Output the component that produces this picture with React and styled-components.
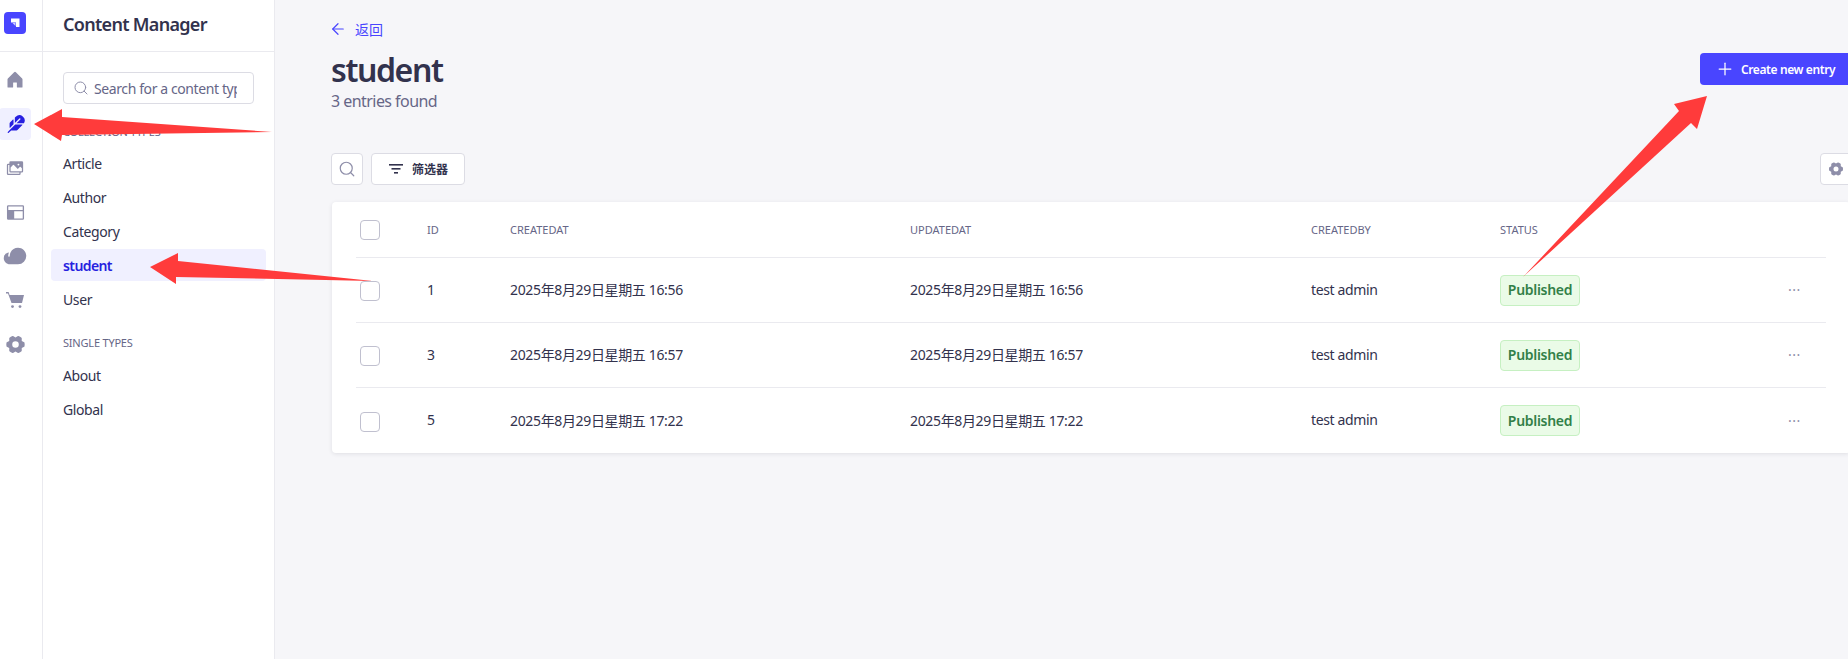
import React from 'react'
import styled, { createGlobalStyle } from 'styled-components'
import {
  PiHouseFill,
  PiFeatherFill,
  PiImagesFill,
  PiLayoutFill,
  PiCloudFill,
  PiGearSixFill,
} from 'react-icons/pi'
import { Search, ArrowLeft, Plus } from 'lucide-react'

const GlobalStyle = createGlobalStyle`
  html, body {
    margin: 0;
    padding: 0;
    background: #f6f6f9;
    font-family: 'Noto Sans', 'Noto Sans CJK SC', sans-serif;
    color: #32324d;
    overflow: hidden;
  }
  * { box-sizing: border-box; }
`

const Page = styled.div`
  position: relative;
  display: flex;
  width: 1848px;
  height: 659px;
  overflow: hidden;
`

const Rail = styled.div`
  width: 43px;
  flex: none;
  background: #fff;
  border-right: 1px solid #eaeaef;
`

const RailTop = styled.div`
  height: 52px;
  padding: 12px 0 0 4px;
  border-bottom: 1px solid #eaeaef;
`

const Logo = styled.div`
  width: 22px;
  height: 22px;
  border-radius: 4px;
  background: #4945ff;
  display: flex;
  align-items: center;
  justify-content: center;
`

const RailList = styled.div`
  display: flex;
  flex-direction: column;
  gap: 12px;
  padding-top: 12px;
  margin-left: -1px;
`

const RailItem = styled.div`
  width: 32px;
  height: 32px;
  border-radius: 4px;
  display: flex;
  align-items: center;
  justify-content: center;
  color: ${(p) => (p.$active ? '#271fe0' : '#8e8ea9')};
  background: ${(p) => (p.$active ? '#f0f0ff' : 'transparent')};
`

const SideNav = styled.div`
  width: 232px;
  flex: none;
  background: #fff;
  border-right: 1px solid #eaeaef;
`

const SideHeader = styled.div`
  height: 52px;
  padding: 0 20px 4px;
  display: flex;
  align-items: center;
  border-bottom: 1px solid #eaeaef;
  font-size: 18px;
  font-weight: 600;
  letter-spacing: -0.7px;
`

const SearchBox = styled.div`
  margin: 20px 20px 0;
  height: 32px;
  padding-left: 9px;
  display: flex;
  align-items: center;
  gap: 5px;
  border: 1px solid #dcdce4;
  border-radius: 4px;
  color: #8e8ea9;
`

const SearchInput = styled.input`
  flex: 1;
  min-width: 0;
  margin-right: 16px;
  padding: 0;
  border: none;
  outline: none;
  background: transparent;
  font-family: inherit;
  font-size: 14px;
  letter-spacing: -0.4px;
  &::placeholder {
    color: #666687;
    opacity: 1;
  }
`

const SectionLabel = styled.div`
  margin: ${(p) => p.$top}px 0 0 20px;
  height: 18px;
  line-height: 18px;
  font-size: 11px;
  letter-spacing: -0.2px;
  color: #666687;
  text-transform: uppercase;
`

const NavList = styled.div`
  display: flex;
  flex-direction: column;
  gap: 2px;
  margin: ${(p) => p.$top}px 8px 0;
`

const NavItem = styled.div`
  height: 32px;
  padding: 0 12px;
  border-radius: 4px;
  display: flex;
  align-items: center;
  font-size: 14px;
  font-weight: ${(p) => (p.$active ? 600 : 400)};
  letter-spacing: ${(p) => (p.$active ? -0.6 : -0.4)}px;
  color: ${(p) => (p.$active ? '#271fe0' : '#32324d')};
  background: ${(p) => (p.$active ? '#f0f0ff' : 'transparent')};
`

const Main = styled.div`
  flex: none;
  width: 1577px;
  padding: 20px 0 0 56px;
`

const Back = styled.div`
  height: 18px;
  display: flex;
  align-items: center;
  gap: 8px;
  margin-left: -2px;
  font-size: 14px;
  color: #4945ff;
`

const HeaderRow = styled.div`
  display: flex;
  justify-content: space-between;
  align-items: flex-start;
  margin-top: 12px;
`

const Title = styled.h1`
  margin: 0;
  font-size: 32px;
  line-height: 40px;
  font-weight: 600;
  letter-spacing: -1.4px;
`

const Subtitle = styled.div`
  font-size: 16px;
  line-height: 22px;
  letter-spacing: -0.55px;
  color: #666687;
`

const CreateButton = styled.div`
  width: 152px;
  height: 32px;
  margin-top: 3px;
  padding-left: 15px;
  display: flex;
  align-items: center;
  gap: 6px;
  border-radius: 4px;
  background: #4945ff;
  color: #fff;
  font-size: 12px;
  font-weight: 600;
  letter-spacing: -0.4px;
  white-space: nowrap;
`

const Toolbar = styled.div`
  display: flex;
  align-items: center;
  gap: 8px;
  margin-top: 41px;
`

const IconButton = styled.div`
  width: 32px;
  height: 32px;
  display: flex;
  align-items: center;
  justify-content: center;
  background: #fff;
  border: 1px solid #dcdce4;
  border-radius: 4px;
  color: #8e8ea9;
  font-size: 16px;
  margin-left: ${(p) => (p.$push ? 'auto' : '0')};
`

const FilterButton = styled.div`
  width: 94px;
  height: 32px;
  display: flex;
  align-items: center;
  justify-content: center;
  gap: 8px;
  background: #fff;
  border: 1px solid #dcdce4;
  border-radius: 4px;
  font-size: 12px;
  font-weight: 600;
`

const Card = styled.div`
  margin: 17px 0 0 1px;
  width: 1518px;
  padding: 0 24px;
  background: #fff;
  border-radius: 4px;
  box-shadow: 0 1px 4px rgba(33, 33, 52, 0.1);
`

const Row = styled.div`
  display: grid;
  grid-template-columns: 67px 83px 400px 401px 189px 1fr 38px;
  align-items: center;
  height: ${(p) => (p.$head ? 56 : 65)}px;
  padding-left: 4px;
  border-bottom: ${(p) => (p.$last ? 'none' : '1px solid #eaeaef')};
  font-size: 14px;
  letter-spacing: -0.35px;
`

const HeadCell = styled.div`
  font-size: 11px;
  letter-spacing: 0;
  color: #666687;
  text-transform: uppercase;
`

const Cell = styled.div`
  margin-bottom: 2px;
`

const Check = styled.div`
  width: 20px;
  height: 20px;
  margin-top: ${(p) => (p.$body ? 2 : 0)}px;
  border: 1px solid #c0c0cf;
  border-radius: 4px;
  background: #fff;
`

const Badge = styled.div`
  display: inline-flex;
  align-items: center;
  justify-content: center;
  width: 80px;
  height: 31px;
  padding-bottom: 1px;
  background: #eafbe7;
  border: 1px solid #c6f0c2;
  border-radius: 4px;
  color: #328048;
  font-size: 14px;
  font-weight: 600;
  letter-spacing: -0.3px;
`

const Dots = styled.div`
  color: #8e8ea9;
  font-size: 14px;
  letter-spacing: 0.5px;
  line-height: 1;
`

const Arrows = styled.svg`
  position: absolute;
  left: 0;
  top: 0;
  pointer-events: none;
`

const CartIcon = () => (
  <svg width="18" height="16" viewBox="0 0 18 16" fill="currentColor">
    <path d="M0 0h2.6l1 3H18l-2 8H5.5L2 1.5H0z" />
    <circle cx="6.5" cy="14.6" r="1.4" />
    <circle cx="14" cy="14.6" r="1.4" />
  </svg>
)

const rows = [
  { id: 1, date: '2025年8月29日星期五 16:56' },
  { id: 3, date: '2025年8月29日星期五 16:57' },
  { id: 5, date: '2025年8月29日星期五 17:22' },
]

const railIcons = [
  <PiHouseFill size={20} />,
  <PiFeatherFill size={21} />,
  <PiImagesFill size={20} />,
  <PiLayoutFill size={21} />,
  <PiCloudFill size={24} />,
  <CartIcon />,
  <PiGearSixFill size={21} />,
]

const App = () => (
  <Page>
    <GlobalStyle />
    <Rail>
      <RailTop>
        <Logo>
          <svg width="12" height="12" viewBox="0 0 12 12">
            <path d="M2 1.5h8.5V10H7V5.5H2z" fill="#fff" />
            <path d="M3.5 6H6.5V9z" fill="#fff" opacity="0.75" />
          </svg>
        </Logo>
      </RailTop>
      <RailList>
        {railIcons.map((icon, i) => (
          <RailItem key={i} $active={i === 1}>
            {icon}
          </RailItem>
        ))}
      </RailList>
    </Rail>
    <SideNav>
      <SideHeader>Content Manager</SideHeader>
      <SearchBox>
        <Search size={16} strokeWidth={1.5} />
        <SearchInput placeholder="Search for a content type" readOnly />
      </SearchBox>
      <SectionLabel $top={19}>Collection Types</SectionLabel>
      <NavList $top={6}>
        <NavItem>Article</NavItem>
        <NavItem>Author</NavItem>
        <NavItem>Category</NavItem>
        <NavItem $active>student</NavItem>
        <NavItem>User</NavItem>
      </NavList>
      <SectionLabel $top={19}>Single Types</SectionLabel>
      <NavList $top={7}>
        <NavItem>About</NavItem>
        <NavItem>Global</NavItem>
      </NavList>
    </SideNav>
    <Main>
      <Back>
        <ArrowLeft size={18} strokeWidth={1.6} />
        返回
      </Back>
      <HeaderRow>
        <div>
          <Title>student</Title>
          <Subtitle>3 entries found</Subtitle>
        </div>
        <CreateButton>
          <Plus size={20} strokeWidth={1.5} />
          Create new entry
        </CreateButton>
      </HeaderRow>
      <Toolbar>
        <IconButton>
          <Search size={18} strokeWidth={1.6} />
        </IconButton>
        <FilterButton>
          <svg width="16" height="10" viewBox="0 0 16 10" fill="#32324d">
            <rect x="1" y="0" width="14" height="1.6" />
            <rect x="3.5" y="4" width="9" height="1.6" />
            <rect x="6" y="8" width="4" height="1.6" />
          </svg>
          筛选器
        </FilterButton>
        <IconButton $push>
          <PiGearSixFill />
        </IconButton>
      </Toolbar>
      <Card>
        <Row $head>
          <Check />
          <HeadCell>ID</HeadCell>
          <HeadCell>createdAt</HeadCell>
          <HeadCell>updatedAt</HeadCell>
          <HeadCell>createdBy</HeadCell>
          <HeadCell>Status</HeadCell>
        </Row>
        {rows.map((r, i) => (
          <Row key={r.id} $last={i === rows.length - 1}>
            <Check $body />
            <Cell>{r.id}</Cell>
            <Cell>{r.date}</Cell>
            <Cell>{r.date}</Cell>
            <Cell>test admin</Cell>
            <div>
              <Badge>Published</Badge>
            </div>
            <Dots>···</Dots>
          </Row>
        ))}
      </Card>
    </Main>
    {/* red annotation arrows drawn over the screenshot */}
    <Arrows width="1848" height="659" viewBox="0 0 1848 659">
      <g fill="#ff3b3b">
        <polygon points="34,124 62,109 62,117 272,132 62,135 61,141" />
        <polygon points="150,267 178,253 178,261 373,281 176,277 176,284" />
        <polygon points="1707,96 1674,104 1679,111 1523,277 1691,123 1697,129" />
      </g>
    </Arrows>
  </Page>
)

export default App
